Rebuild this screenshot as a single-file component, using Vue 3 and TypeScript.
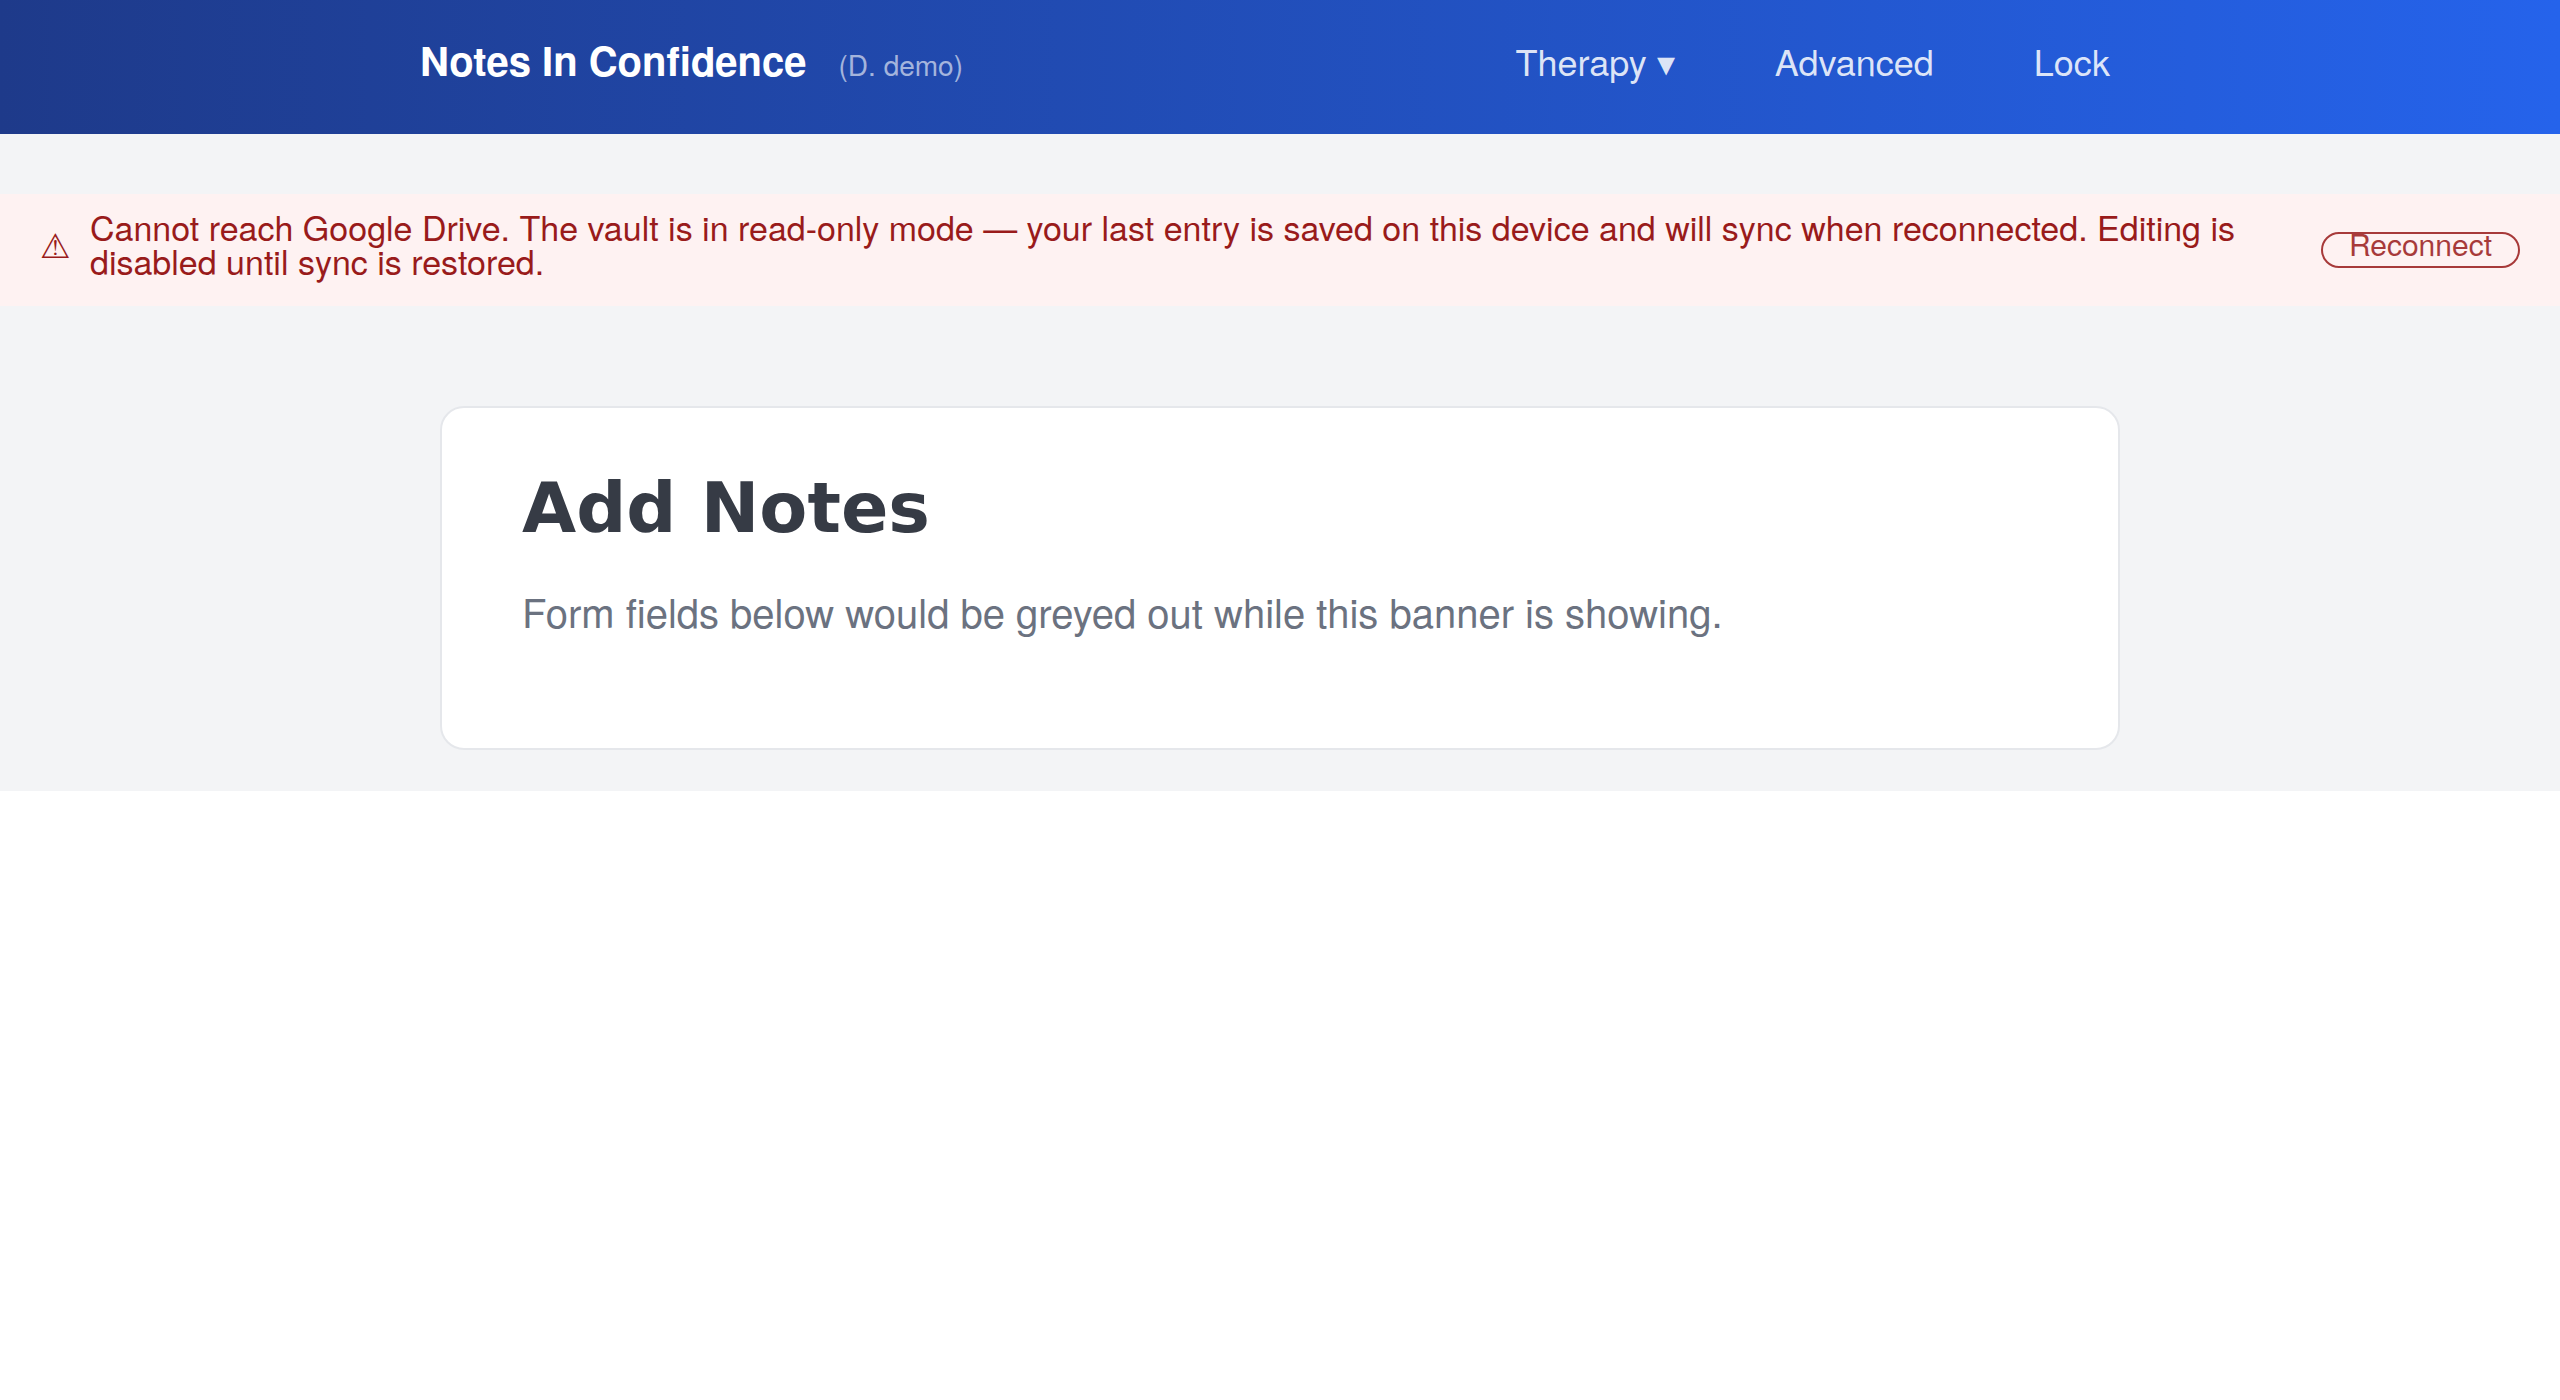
<script setup lang="ts">
const message: string =
  'Cannot reach Google Drive. The vault is in read-only mode — your last entry is saved on this device and will sync when reconnected. Editing is disabled until sync is restored.'
</script>

<template>
  <div class="page">
    <header class="bar">
      <div class="bar-inner">
        <div class="brand">
          <span class="name">Notes In Confidence</span>
          <span class="user">(D. demo)</span>
        </div>
        <nav class="nav">
          <a href="#therapy">Therapy ▾</a>
          <a href="#advanced">Advanced</a>
          <a href="#lock">Lock</a>
        </nav>
      </div>
    </header>
    <div class="banner" role="alert">
      <span class="warn" aria-hidden="true">⚠</span>
      <p class="message">{{ message }}</p>
      <button type="button" class="reconnect">Reconnect</button>
    </div>
    <main class="card">
      <h1>Add Notes</h1>
      <p>Form fields below would be greyed out while this banner is showing.</p>
    </main>
  </div>
</template>

<style>
body {
  margin: 0;
  background: #fff;
}
</style>

<style scoped>
.page {
  font-family: "TeX Gyre Heros", "Nimbus Sans", "Liberation Sans", Arial, sans-serif;
  background: #f3f4f6;
  padding-bottom: 41px;
}
.bar {
  background: linear-gradient(90deg, #1e3a8a, #2563eb);
}
.bar-inner {
  box-sizing: border-box;
  max-width: 1720px;
  height: 134px;
  margin: 0 auto;
  padding-bottom: 8px;
  display: flex;
  align-items: baseline;
  justify-content: space-between;
  line-height: 120px;
}
.brand {
  display: flex;
  align-items: baseline;
  gap: 32px;
}
.name {
  font-size: 40px;
  font-weight: 700;
  color: #fff;
}
.user {
  font-size: 28px;
  color: rgba(255, 255, 255, 0.6);
}
.nav {
  display: flex;
  gap: 100px;
  padding-right: 30px;
}
.nav a {
  font-size: 36px;
  color: rgba(255, 255, 255, 0.85);
  text-decoration: none;
}
.banner {
  margin-top: 60px;
  display: flex;
  align-items: center;
  gap: 20px;
  padding: 16px 40px 28px;
  background: #fef2f2;
  color: #991b1b;
  font-size: 34px;
  line-height: 34px;
}
.message {
  flex: 1;
  margin: 0;
}
.reconnect {
  box-sizing: border-box;
  height: 36px;
  margin: 12px 0 0 60px;
  padding: 0 26px 12px;
  border: 2px solid #991b1b;
  border-radius: 18px;
  background: transparent;
  color: #991b1b;
  font-family: inherit;
  font-size: 30px;
  line-height: 20px;
  opacity: 0.85;
}
.card {
  box-sizing: border-box;
  max-width: 1680px;
  margin: 100px auto 0;
  padding: 58px 80px 113px;
  background: #fff;
  border: 2px solid #e5e7eb;
  border-radius: 24px;
}
.card h1 {
  margin: 0;
  font: 700 70px/84px "DejaVu Sans", sans-serif;
  color: #363b45;
}
.card p {
  margin: 37px 0 0;
  font-size: 40px;
  line-height: 48px;
  color: #6b7280;
}
</style>
